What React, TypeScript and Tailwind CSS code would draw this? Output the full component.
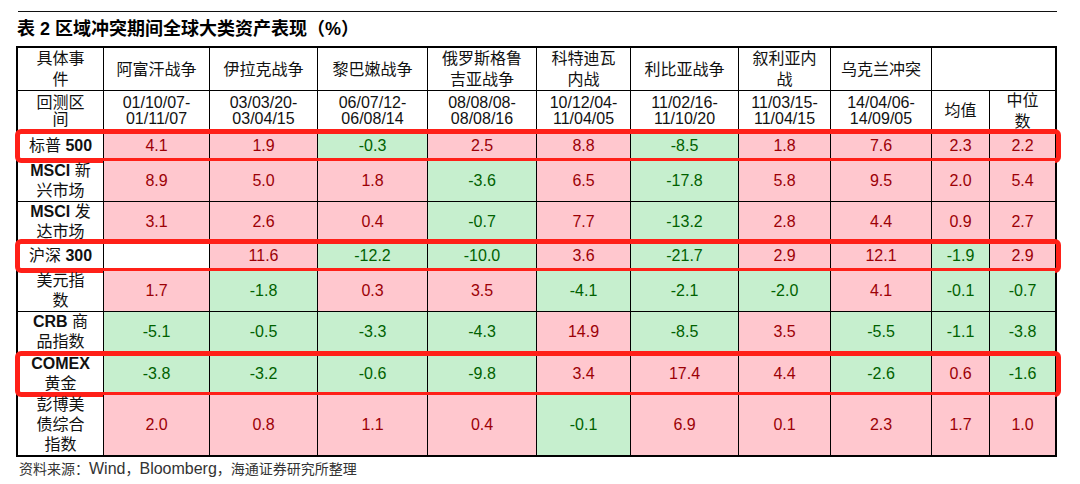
import type { ReactNode } from "react";

const GRID = "grid grid-cols-[86px_106px_108px_110px_109px_94px_108px_92px_101px_58px_65px]";

const EVENTS: ReactNode[] = [
  "阿富汗战争",
  "伊拉克战争",
  "黎巴嫩战争",
  <>俄罗斯格鲁<br />吉亚战争</>,
  <>科特迪瓦<br />内战</>,
  "利比亚战争",
  <>叙利亚内<br />战</>,
  "乌克兰冲突",
];

const DATES = [
  ["01/10/07-", "01/11/07"],
  ["03/03/20-", "03/04/15"],
  ["06/07/12-", "06/08/14"],
  ["08/08/08-", "08/08/16"],
  ["10/12/04-", "11/04/05"],
  ["11/02/16-", "11/10/20"],
  ["11/03/15-", "11/04/15"],
  ["14/04/06-", "14/09/05"],
];

interface Row {
  label: ReactNode;
  values: (number | null)[];
  h: string;
  boxed?: boolean;
}

const ROWS: Row[] = [
  { label: <>标普 <b>500</b></>, values: [4.1, 1.9, -0.3, 2.5, 8.8, -8.5, 1.8, 7.6, 2.3, 2.2], h: "h-[30px]", boxed: true },
  { label: <><b>MSCI</b> 新<br />兴市场</>, values: [8.9, 5.0, 1.8, -3.6, 6.5, -17.8, 5.8, 9.5, 2.0, 5.4], h: "h-[41px]" },
  { label: <><b>MSCI</b> 发<br />达市场</>, values: [3.1, 2.6, 0.4, -0.7, 7.7, -13.2, 2.8, 4.4, 0.9, 2.7], h: "h-[39px]" },
  { label: <>沪深 <b>300</b></>, values: [null, 11.6, -12.2, -10.0, 3.6, -21.7, 2.9, 12.1, -1.9, 2.9], h: "h-[30px]", boxed: true },
  { label: <>美元指<br />数</>, values: [1.7, -1.8, 0.3, 3.5, -4.1, -2.1, -2.0, 4.1, -0.1, -0.7], h: "h-[41px]" },
  { label: <><b>CRB</b> 商<br />品指数</>, values: [-5.1, -0.5, -3.3, -4.3, 14.9, -8.5, 3.5, -5.5, -1.1, -3.8], h: "h-[41px]" },
  { label: <><b>COMEX</b><br />黄金</>, values: [-3.8, -3.2, -0.6, -9.8, 3.4, 17.4, 4.4, -2.6, 0.6, -1.6], h: "h-[42px]", boxed: true },
  { label: <>彭博美<br />债综合<br />指数</>, values: [2.0, 0.8, 1.1, 0.4, -0.1, 6.9, 0.1, 2.3, 1.7, 1.0], h: "h-[60px]" },
];

function Cell({ children, className = "", last = false, bottom = true }: { children?: ReactNode; className?: string; last?: boolean; bottom?: boolean }) {
  return (
    <div
      className={`flex items-center justify-center text-center border-black ${last ? "" : "border-r"} ${bottom ? "border-b" : ""} ${className}`}
    >
      <div>{children}</div>
    </div>
  );
}

function ValueCell({ v, last, bottom }: { v: number | null; last: boolean; bottom: boolean }) {
  if (v === null) return <Cell last={last} bottom={bottom} className="bg-white" />;
  const neg = v < 0;
  return (
    <Cell last={last} bottom={bottom} className={neg ? "bg-[#c6efce] text-[#006100]" : "bg-[#ffc7ce] text-[#9c0006]"}>
      {v.toFixed(1)}
    </Cell>
  );
}

export default function App() {
  return (
    <div className="w-[1080px] h-[484px] bg-white pt-[11px] font-['Liberation_Sans','Noto_Sans_CJK_SC',sans-serif] text-[#111]">
      <div className="ml-[18px] w-[1039px] h-px bg-[#111]" />

      <h1 className="mt-[5px] pl-[17px] text-[18px] leading-[24px] font-bold text-black">
        表 2 区域冲突期间全球大类资产表现（%）
      </h1>

      <div className="mt-[5px] ml-[16px] w-[1041px] border-2 border-black text-[16px]">
        {/* header: events */}
        <div className={`${GRID} h-[42px] leading-[21px]`}>
          <Cell>具体事<br />件</Cell>
          {EVENTS.map((e, i) => (
            <Cell key={i}>{e}</Cell>
          ))}
          <Cell last className="col-span-2" />
        </div>

        {/* header: periods */}
        <div className={`${GRID} h-[41px]`}>
          <Cell className="leading-[17px]">回测区<br />间</Cell>
          {DATES.map((d, i) => (
            <Cell key={i} className="leading-[16.5px]">
              {d[0]}<br />{d[1]}
            </Cell>
          ))}
          <Cell>均值</Cell>
          <Cell last className="leading-[21px]">中位<br />数</Cell>
        </div>

        {ROWS.map((r, ri) => {
          const bottom = ri < ROWS.length - 1;
          return (
            <div key={ri} className={`${GRID} relative ${r.h}`}>
              <Cell bottom={bottom} className="leading-[20px]">{r.label}</Cell>
              {r.values.map((v, i) => (
                <ValueCell key={i} v={v} last={i === r.values.length - 1} bottom={bottom} />
              ))}
              {r.boxed && (
                <div className="absolute -left-[3px] -right-[6px] -top-[2px] -bottom-[2px] border-[5px] border-[#ff2018] rounded-[6px] pointer-events-none" />
              )}
            </div>
          );
        })}
      </div>

      <p className="mt-[2px] pl-[19px] text-[14px] leading-[20px] text-[#333]">
        资料来源：<span className="text-[16px]">Wind</span>，<span className="text-[16px]">Bloomberg</span>，海通证券研究所整理
      </p>
    </div>
  );
}
